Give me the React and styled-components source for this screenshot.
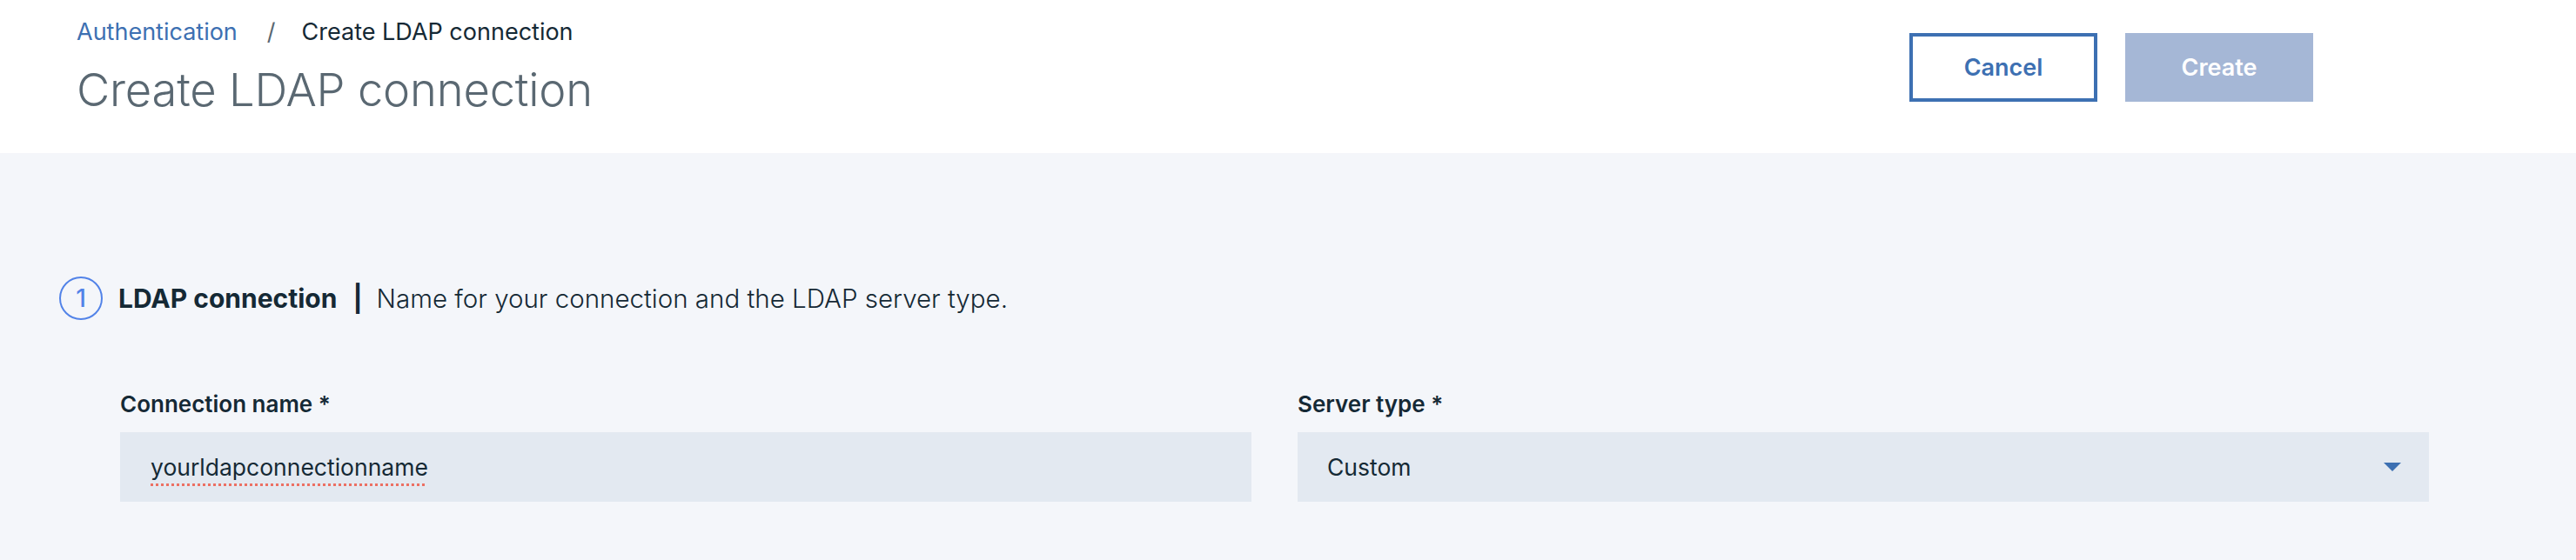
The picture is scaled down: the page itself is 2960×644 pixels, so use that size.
import React from "react";
import styled, { createGlobalStyle } from "styled-components";

const GlobalStyle = createGlobalStyle`
  html, body {
    margin: 0;
    padding: 0;
    background: #f4f6fa;
    font-family: Inter, "Noto Sans", sans-serif;
    color: #152935;
  }
  * { box-sizing: border-box; }
`;

const Page = styled.div`
  width: 2960px;
  min-height: 644px;
  background: #f4f6fa;
`;

const Header = styled.header`
  height: 176px;
  background: #ffffff;
  display: flex;
  justify-content: space-between;
  align-items: flex-start;
  padding: 0 302px 0 88px;
`;

const HeaderText = styled.div`
  display: flex;
  flex-direction: column;
  padding-top: 18px;
`;

const Breadcrumb = styled.nav`
  display: flex;
  align-items: center;
  font-size: 27px;
  line-height: 38px;
  font-weight: 400;
`;

const CrumbLink = styled.a`
  color: #3d70b2;
  text-decoration: none;
`;

const CrumbSep = styled.span`
  color: #5a6872;
  margin: 0 30px 0 34px;
`;

const CrumbCurrent = styled.span`
  color: #152935;
`;

const Title = styled.h1`
  margin: 15px 0 0;
  font-size: 52.5px;
  line-height: 64px;
  font-weight: 300;
  color: #5a6872;
  letter-spacing: -0.2px;
`;

const Actions = styled.div`
  display: flex;
  gap: 32px;
  padding-top: 38px;
`;

const Button = styled.button`
  width: 216px;
  height: 79px;
  font-family: inherit;
  font-size: 27px;
  font-weight: 600;
  border: 4px solid ${(p) => (p.$primary ? "#a5b7d6" : "#3d70b2")};
  background: ${(p) => (p.$primary ? "#a5b7d6" : "#ffffff")};
  color: ${(p) => (p.$primary ? "#ffffff" : "#3d70b2")};
  cursor: ${(p) => (p.$primary ? "not-allowed" : "pointer")};
  padding: 0;
`;

const Main = styled.main`
  padding: 142px 0 0 68px;
`;

const StepRow = styled.div`
  display: flex;
  align-items: center;
`;

const StepBadge = styled.span`
  width: 50px;
  height: 50px;
  border-radius: 50%;
  border: 2px solid #5283e8;
  color: #5283e8;
  display: flex;
  align-items: center;
  justify-content: center;
  font-size: 28px;
  font-weight: 500;
  margin-right: 18px;
`;

const StepTitle = styled.span`
  font-size: 30px;
  font-weight: 700;
  color: #152935;
`;

const StepSep = styled.span`
  font-size: 30px;
  font-weight: 700;
  margin: 0 16px 0 18px;
  color: #152935;
`;

const StepDesc = styled.span`
  font-size: 29.5px;
  font-weight: 300;
  color: #152935;
`;

const FormGrid = styled.div`
  display: grid;
  grid-template-columns: 1300px 1300px;
  column-gap: 53px;
  margin: 81px 0 0 70px;
`;

const Field = styled.div`
  display: flex;
  flex-direction: column;
`;

const Label = styled.label`
  font-size: 26px;
  line-height: 32px;
  font-weight: 600;
  color: #152935;
  margin-bottom: 16px;
`;

const TextField = styled.div`
  height: 80px;
  background: #e3e9f1;
  display: flex;
  align-items: center;
  padding: 0 35px;
  font-size: 26.5px;
  font-weight: 400;
  color: #152935;
  cursor: text;
`;

const Misspelled = styled.span`
  text-decoration: underline dotted #ec7063;
  text-decoration-thickness: 3px;
  text-underline-offset: 9px;
`;

const SelectBox = styled.div`
  height: 80px;
  background: #e3e9f1;
  display: flex;
  align-items: center;
  justify-content: space-between;
  padding: 0 32px 0 34px;
  font-size: 26.5px;
  color: #152935;
  cursor: pointer;
`;

const Caret = () => (
  <svg width="20" height="10" viewBox="0 0 20 10" aria-hidden="true">
    <path d="M0 0 H20 L10 10 Z" fill="#3d70b2" />
  </svg>
);

export default function App() {
  return (
    <Page>
      <GlobalStyle />
      <Header>
        <HeaderText>
          <Breadcrumb>
            <CrumbLink href="#">Authentication</CrumbLink>
            <CrumbSep>/</CrumbSep>
            <CrumbCurrent>Create LDAP connection</CrumbCurrent>
          </Breadcrumb>
          <Title>Create LDAP connection</Title>
        </HeaderText>
        <Actions>
          <Button>Cancel</Button>
          <Button $primary disabled>
            Create
          </Button>
        </Actions>
      </Header>
      <Main>
        <StepRow>
          <StepBadge>1</StepBadge>
          <StepTitle>LDAP connection</StepTitle>
          <StepSep>|</StepSep>
          <StepDesc>Name for your connection and the LDAP server type.</StepDesc>
        </StepRow>
        <FormGrid>
          <Field>
            <Label>Connection name *</Label>
            <TextField role="textbox" aria-label="Connection name">
              <Misspelled>yourldapconnectionname</Misspelled>
            </TextField>
          </Field>
          <Field>
            <Label>Server type *</Label>
            <SelectBox role="combobox" aria-label="Server type">
              <span>Custom</span>
              <Caret />
            </SelectBox>
          </Field>
        </FormGrid>
      </Main>
    </Page>
  );
}
